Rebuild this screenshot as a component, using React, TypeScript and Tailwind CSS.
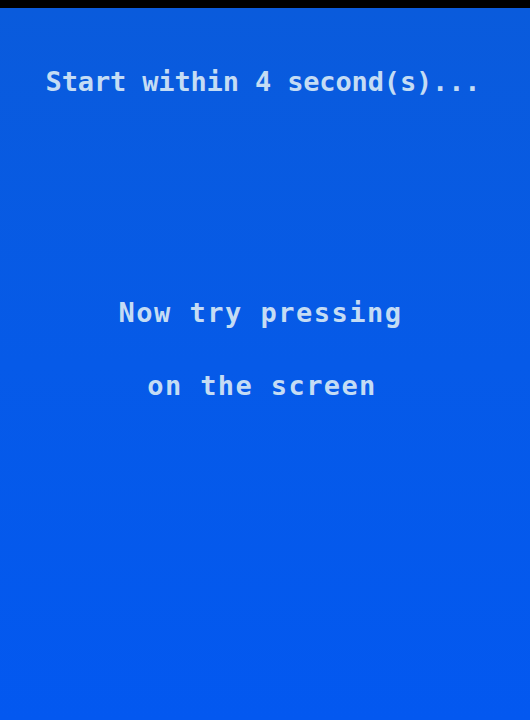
export default function App() {
  return (
    <div className="w-[530px] h-[720px] bg-black flex flex-col overflow-hidden">
      <div className="h-[8px] shrink-0 bg-black" />
      <div className="flex-1 flex flex-col items-center bg-gradient-to-b from-[#0a5bdc] via-[#065ae8] to-[#0358f0] text-[#c4dcf4] font-['DejaVu_Sans_Mono',monospace] font-bold">
        <p className="mt-[56px] pr-[4px] text-[27px] leading-[36px] tracking-[-0.15px]">Start within 4 second(s)...</p>
        <p className="mt-[195px] pr-[9px] text-[27px] leading-[36px] tracking-[1.5px]">Now try pressing</p>
        <p className="mt-[37px] pr-[6px] text-[27px] leading-[36px] tracking-[1.4px]">on the screen</p>
      </div>
    </div>
  );
}
